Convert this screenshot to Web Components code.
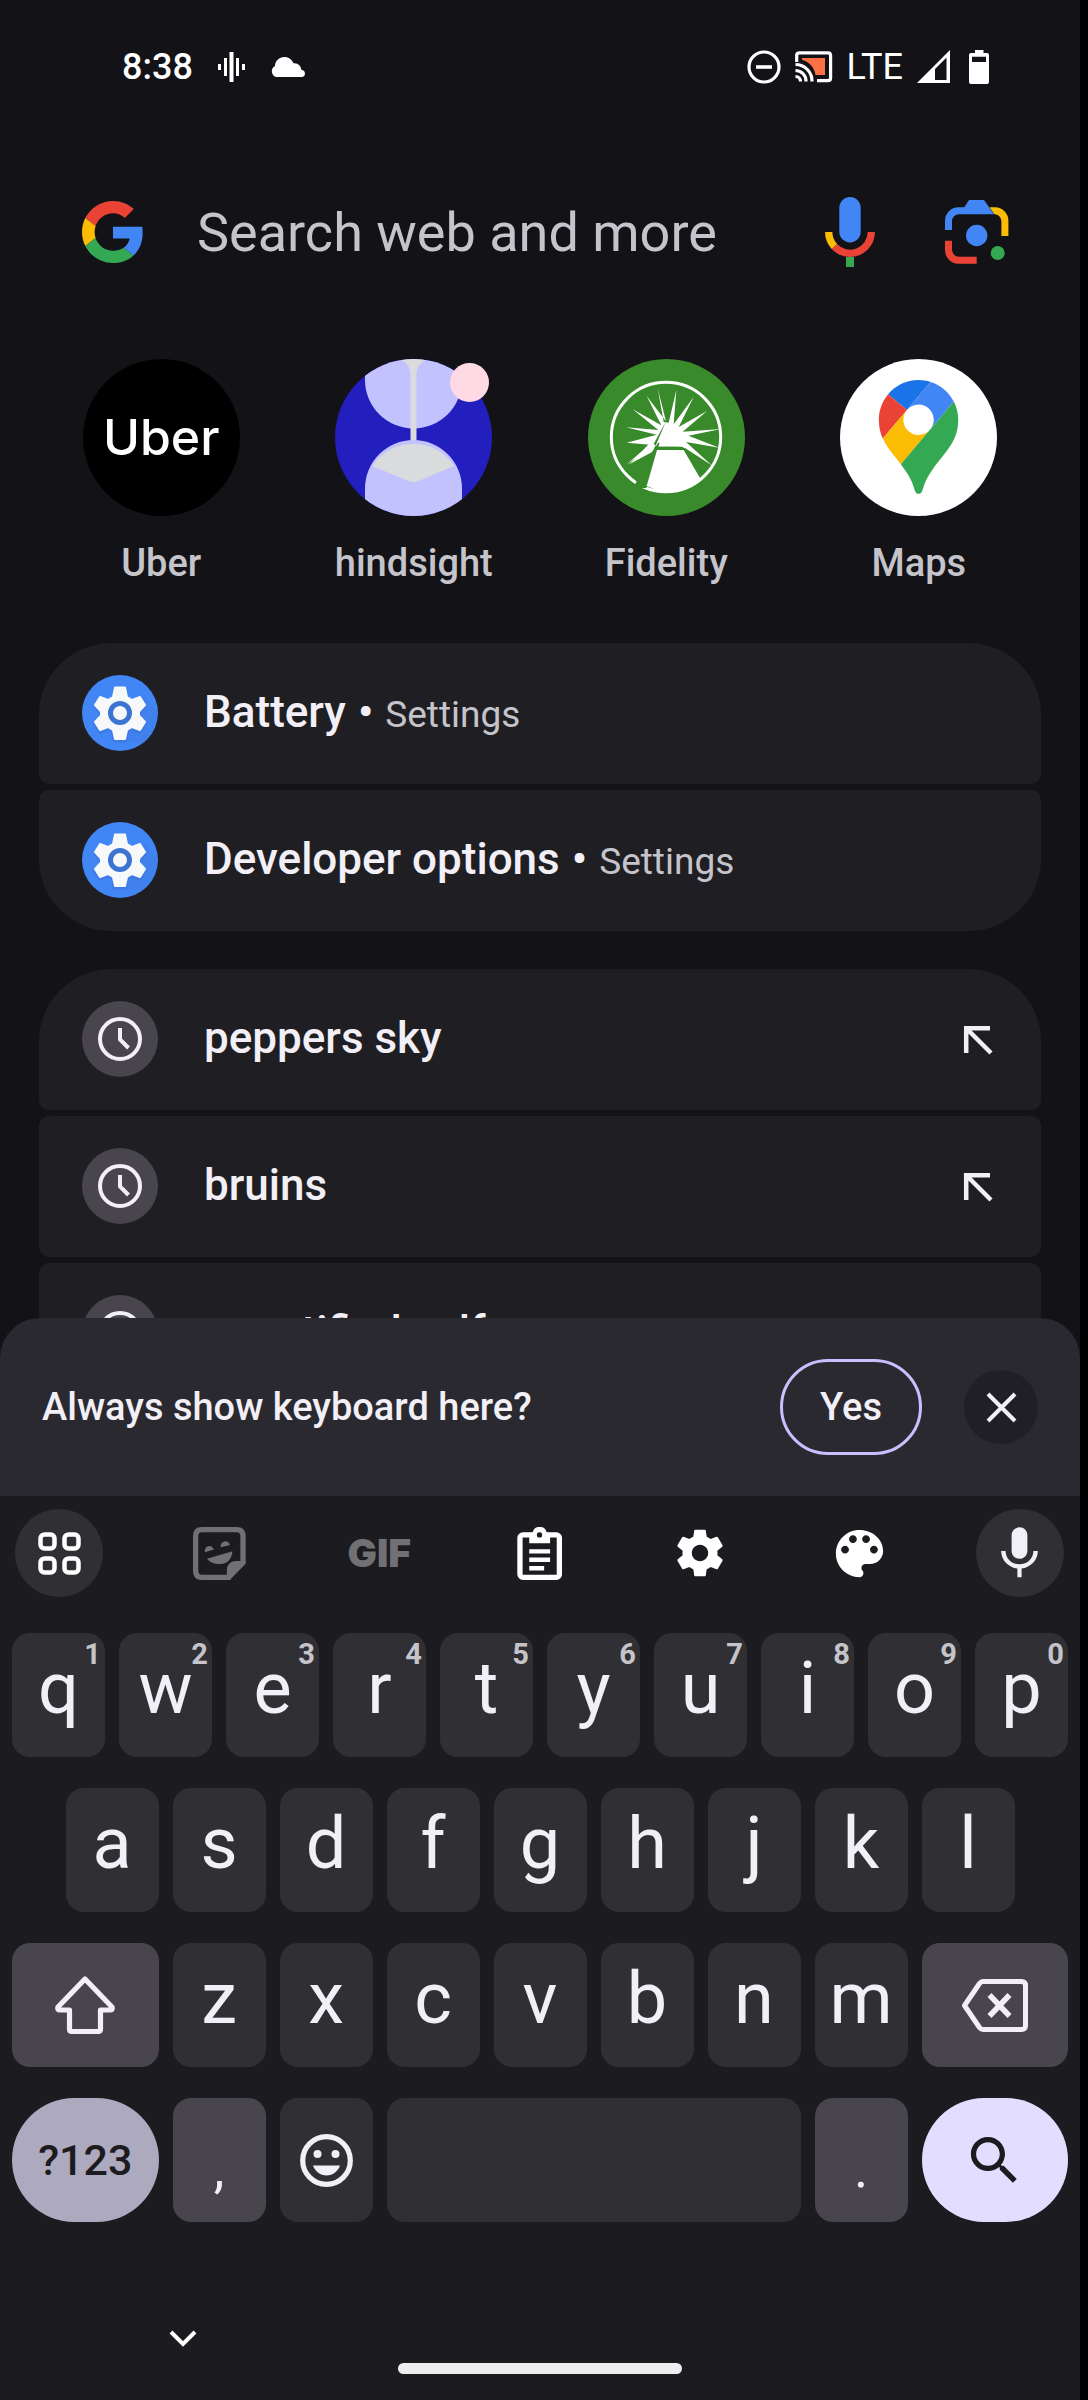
<!DOCTYPE html>
<html lang="en">
<head>
<meta charset="utf-8">
<meta name="viewport" content="width=device-width, initial-scale=1">
<title>Search</title>
<style>
  :root {
    --surface: #131317;
    --card: #1f1f23;
    --prompt: #2b2930;
    --keyboard: #1c1b20;
    --key: #303034;
    --key-strong: #48464c;
    --text: #f2eff6;
    --muted: #c6c4cb;
    --disabled: #717074;
    --accent: #c9bfff;
  }
  body { margin: 0; background: #000; font-family: Roboto, "Noto Sans", sans-serif; color: var(--text); }
</style>
</head>
<body>
<phone-screen>
  <status-bar></status-bar>
  <search-box placeholder="Search web and more"></search-box>
  <app-row>
    <app-shortcut label="Uber" art="uber"></app-shortcut>
    <app-shortcut label="hindsight" art="hindsight" badge></app-shortcut>
    <app-shortcut label="Fidelity" art="fidelity"></app-shortcut>
    <app-shortcut label="Maps" art="maps"></app-shortcut>
  </app-row>
  <result-group>
    <result-item icon="settings-app" source="Settings">Battery</result-item>
    <result-item icon="settings-app" source="Settings">Developer options</result-item>
  </result-group>
  <result-group>
    <result-item icon="clock" fill>peppers sky</result-item>
    <result-item icon="clock" fill>bruins</result-item>
    <result-item icon="clock" fill>quantified self</result-item>
  </result-group>
  <soft-keyboard slot="keyboard"></soft-keyboard>
</phone-screen>

<script>
const ICONS = {
  wave: [27, 30, '0 0 27 30', '<path stroke="#fff" stroke-width="3" d="M1.500 12v6M7.500 6v18M19.500 6v18M25.500 12v6"/><path stroke="#fff" stroke-width="4" d="M13.500 0v30"/>'],
  cloud: [36, 20, '0 0 36 20', '<path fill="#fff" d="M6 20a6 6 0 0 1-1-11C5 4 9 0 14.500 0c4 0 7.500 2.500 9 6.300C28 5.700 31 9 31.500 13A3.600 3.600 0 0 1 32.500 20z"/>'],
  dnd: [34, 34, '0 0 34 34', '<circle cx="17" cy="17" r="15" fill="none" stroke="#fff" stroke-width="3.200"/><path stroke="#fff" stroke-width="3.600" d="M9 17h16"/>'],
  cast: [38, 32, '0 0 38 32', '<g fill="none" stroke="#fff" stroke-width="3.200"><path d="M1.700 11V4.500q0-2.700 2.700-2.700h28.500q2.700 0 2.700 2.700v22.500q0 2.700-2.700 2.700H22"/><path d="M.5 13.500A16.500 16.500 0 0 1 17 30.500M.5 19.500A10.500 10.500 0 0 1 11 30.500"/><path d="M.5 25.500A5 5 0 0 1 5.500 30.500"/></g><path fill="#ff7043" d="M7 7h23v17h-9.500C19 16 14.500 11 7 8.800z"/>'],
  signal: [33, 33, '0 0 33 33', '<path fill="#fff" fill-rule="evenodd" d="M0 33 33 0v33zM18 19v11h11.500V7.500z"/>'],
  battery: [20, 34, '0 0 20 34', '<path fill="#fff" fill-rule="evenodd" d="M6 0h8.500v3H18q2 0 2 2v27q0 2-2 2H2q-2 0-2-2V5q0-2 2-2h4zM3 6.800V12h14V6.800z"/>'],
  google: [62, 62, '0 0 48 48', '<path fill="#ea4335" d="M24 9.500c3.540 0 6.710 1.220 9.210 3.600l6.850-6.850C35.900 2.380 30.470 0 24 0 14.620 0 6.510 5.380 2.560 13.220l7.980 6.190C12.430 13.720 17.740 9.500 24 9.500z"/><path fill="#4285f4" d="M46.980 24.550c0-1.570-.15-3.090-.38-4.550H24v9.020h12.940c-.58 2.960-2.260 5.480-4.780 7.180l7.730 6c4.510-4.180 7.090-10.360 7.090-17.650z"/><path fill="#fbbc05" d="M10.530 28.590c-.48-1.450-.76-2.990-.76-4.590s.27-3.140.76-4.590l-7.980-6.190C.92 16.460 0 20.120 0 24c0 3.880.92 7.540 2.560 10.780l7.970-6.190z"/><path fill="#34a853" d="M24 48c6.480 0 11.930-2.130 15.890-5.810l-7.730-6c-2.150 1.450-4.920 2.300-8.160 2.300-6.260 0-11.570-4.220-13.470-9.910l-7.980 6.190C6.510 42.620 14.620 48 24 48z"/>'],
  voice: [50, 70, '0 0 50 70', '<rect x="14.300" width="21.400" height="45.500" rx="10.700" fill="#4285f4"/><g fill="none" stroke-width="7.300"><path stroke="#ea4335" d="M9.400 49.500A21.300 21.300 0 0 0 46.300 35"/><path stroke="#fbbc05" d="M3.700 35A21.300 21.300 0 0 0 9.400 49.500"/></g><path fill="#34a853" d="M21 60h8v10h-8z"/>'],
  lens: [64, 64, '0 0 64 64', '<path fill="#fbbc05" d="M44.500 7.300h5.500A13.400 13.400 0 0 1 63.400 20.700V36h-7V21a6.700 6.700 0 0 0-7-6.700z"/><path fill="#4285f4" d="M0 30V20.700A13.400 13.400 0 0 1 13.400 7.300H19.300L24 0h15l10 14.300H14a7 7 0 0 0-7 7V30z"/><path fill="#ea4335" d="M0 40.700h7v9a7 7 0 0 0 7 7H31.700v7H13.400A13.400 13.400 0 0 1 0 50.300z"/><circle cx="31.700" cy="35.500" r="10.700" fill="#4285f4"/><circle cx="52.700" cy="53" r="7" fill="#34a853"/>'],
  hindsight: [157, 157, '0 0 157 157', '<defs><clipPath id="disc"><circle cx="78.500" cy="78.500" r="78.500"/></clipPath></defs><g clip-path="url(#disc)"><path fill="#231fbe" d="M0 0h157v157H0z"/><path fill="#c2c2ff" d="M30 0h97v21a48.500 48.500 0 0 1-97 0z"/><path fill="#dadbdc" d="M62 0h33c-9 2-13.500 7-13.500 16v68h-6V16C75.500 7 71 2 62 0z"/><path fill="#c2c2ff" d="M30 157v-27.500a48.500 48.500 0 0 1 97 0V157z"/><path fill="#dadbdc" d="M37.500 107a48.500 48.500 0 0 1 81.500 0l-35.500 15q-5 2-10 0z"/></g>'],
  fidelity: [157, 157, '801 57 471 471', '<circle cx="1036.500" cy="292.500" r="235.500" fill="#388a2a"/><circle cx="1035" cy="291" r="164" fill="none" stroke="#fff" stroke-width="9"/><path fill="#fff" d="m1010 145 18 101 15 2 23-98-8 103 60-82-45 90 85-48-73 62 115-8-98 20 93 36-100-17 77 70-80-52-80-16-20 29-67 36 62-59-70-6 90-24-92-22 97 8-77-62 86 48-44-88 58 76z"/><path fill="#388a2a" d="M1034 246 998 312l16 12-38 120h-40l60-108z M1000 320h84l8 10h-90z"/><path fill="#fff" d="m1036 250-24 70h70z"/><path fill="#388a2a" d="M1004 320h76l10 10h-86z"/><path fill="#fff" d="M1008 330h80l49 84q-60 70-160 24zM1003 318l-30 24-35 17-22 15 48-42 22-22z"/>'],
  maps: [157, 157, '-45.200 -24.500 182.700 182.700', '<circle cx="46.150" cy="66.850" r="91.350" fill="#fff"/><path fill="#1a73e8" d="M60.200 2.200C55.800.8 51 0 46.100 0 32 0 19.300 6.400 10.800 16.500l21.800 18.300L60.200 2.200z"/><path fill="#ea4335" d="M10.800 16.500C4.100 24.500 0 34.900 0 46.100c0 8.700 1.700 15.700 4.600 22l28-33.300-21.800-18.300z"/><path fill="#4285f4" d="M46.200 28.500c9.800 0 17.700 7.900 17.700 17.700 0 4.300-1.600 8.300-4.200 11.400 0 0 13.900-16.600 27.500-32.700-5.600-10.800-15.300-19-27-22.700L32.600 34.800c3.300-3.800 8.100-6.300 13.600-6.300"/><path fill="#fbbc04" d="M46.200 63.800c-9.800 0-17.700-7.900-17.700-17.700 0-4.300 1.500-8.300 4.100-11.300l-28 33.300c4.800 10.600 12.800 19.200 21 29.900l34.100-40.500c-3.300 3.900-8.100 6.300-13.500 6.300"/><path fill="#34a853" d="M59.100 109.200c15.400-24.100 33.300-35 33.300-63 0-7.700-1.900-14.900-5.200-21.300L25.600 98c2.600 3.400 5.300 7.300 7.900 11.300 9.400 14.500 6.800 23.100 12.800 23.100s3.400-8.700 12.800-23.200"/>'],
  gear: [56, 56, '0 0 24 24', '<path fill="#fff" d="M19.430 12.980c.04-.32.07-.64.07-.98s-.03-.66-.07-.98l2.110-1.650c.19-.15.24-.42.12-.64l-2-3.460c-.12-.22-.39-.3-.61-.22l-2.490 1c-.52-.4-1.080-.73-1.690-.98l-.38-2.650C14.460 2.180 14.250 2 14 2h-4c-.25 0-.46.18-.49.42l-.38 2.650c-.61.25-1.170.59-1.690.98l-2.490-1c-.23-.09-.49 0-.61.22l-2 3.460c-.13.22-.07.49.12.64l2.110 1.650c-.04.32-.07.65-.07.98s.03.66.07.98l-2.110 1.650c-.19.15-.24.42-.12.64l2 3.460c.12.22.39.3.61.22l2.490-1c.52.4 1.080.73 1.690.98l.38 2.650c.03.24.24.42.49.42h4c.25 0 .46-.18.49-.42l.38-2.650c.61-.25 1.170-.59 1.690-.98l2.490 1c.23.09.49 0 .61-.22l2-3.460c.12-.22.07-.49-.12-.64l-2.110-1.650zM12 15.500c-1.930 0-3.500-1.570-3.500-3.500s1.570-3.500 3.500-3.500 3.500 1.570 3.500 3.500-1.570 3.500-3.500 3.500z"/>'],
  'settings-app': [76, 76, '0 0 76 76', '<circle cx="38" cy="38" r="38" fill="#4285f4"/><path fill="#3f7de6" opacity=".5" d="m62 22 13 13a38 38 0 0 1-14 33L36 66z"/><path fill="none" stroke="#3b74db" stroke-width="4" opacity=".5" stroke-linejoin="round" d="m33 14.500h10l2 9.500 5 3 8-3 5 8-6 6.500v4l6 6.500-5 8-8-3-5 3-2 9H33l-2-9-5-3-8 3-5-8 6-6.500v-4l-6-6.500 5-8 8 3 5-3z"/><path fill="#f6f8fa" stroke="#f6f8fa" stroke-width="2" stroke-linejoin="round" d="m33 12.500h10l2 9.500 5 3 8-3 5 8-6 6.500v4l6 6.500-5 8-8-3-5 3-2 9H33l-2-9-5-3-8 3-5-8 6-6.500v-4l-6-6.500 5-8 8 3 5-3z"/><circle cx="38" cy="38" r="9.500" fill="#f6f8fa" stroke="#3c74d2" stroke-width="5"/>'],
  clock: [76, 76, '0 0 76 76', '<circle cx="38" cy="38" r="38" fill="#48464c"/><circle cx="38" cy="38" r="20" fill="none" stroke="#f2eff6" stroke-width="4"/><path fill="none" stroke="#f2eff6" stroke-width="4" d="M38 27v11.500l8.500 8.500"/>'],
  fillin: [46, 46, '0 0 46 46', '<path fill="none" stroke="#f2eff6" stroke-width="4.500" d="M12.200 37V12.200H36M13 13l24 24"/>'],
  close: [31, 31, '0 0 31 31', '<path fill="none" stroke="#f2eff6" stroke-width="4" d="m2 2 27 27M29 2 2 29"/>'],
  grid: [43, 43, '0 0 43 43', '<g fill="none" stroke="#fff" stroke-width="4.500"><rect x="2.500" y="2.500" width="14" height="14" rx="4"/><rect x="26.500" y="2.500" width="14" height="14" rx="4"/><rect x="2.500" y="26.500" width="14" height="14" rx="4"/><rect x="26.500" y="26.500" width="14" height="14" rx="4"/></g>'],
  sticker: [53, 53, '39 80 160 160', '<path fill="none" stroke="#717074" stroke-width="16" d="M190 188v-81q0-19-19-19H66q-19 0-19 19v106q0 19 19 19h86"/><path fill="#717074" d="M198 190v1l-48 49h-9v-27q0-30 30-30h27zM75 156a13.500 14 0 1 1 27-8zM123 141a14 14 0 1 1 28-7zM81 176l77-23c-2 30-22 39-40 39-16 0-29-6-37-16z"/>'],
  clipboard: [45, 53, '1011 80 134 160', '<rect x="1019" y="104" width="119" height="128" rx="9" fill="none" stroke="#fff" stroke-width="16"/><path fill="#fff" d="M1047 97h10a22 22 0 0 1 43 0h10v32h-63zM1047 147h63v13h-63zM1047 172h63v14h-63zM1047 198h45v13h-45z"/><circle cx="1078" cy="104" r="8" fill="#1c1b20"/>'],
  palette: [63, 63, '0 0 24 24', '<path fill="#fff" d="M12 3c-4.970 0-9 4.030-9 9s4.030 9 9 9c.83 0 1.500-.67 1.500-1.500 0-.39-.15-.74-.39-1.010-.23-.26-.38-.61-.38-.99 0-.83.67-1.500 1.500-1.500H16c2.760 0 5-2.240 5-5 0-4.420-4.030-8-9-8zm-5.500 9c-.83 0-1.500-.67-1.500-1.500S5.670 9 6.500 9 8 9.670 8 10.500 7.330 12 6.500 12zm3-4C8.670 8 8 7.330 8 6.500S8.670 5 9.500 5s1.500.67 1.500 1.500S10.330 8 9.500 8zm5 0c-.83 0-1.500-.67-1.500-1.500S13.670 5 14.500 5s1.500.67 1.500 1.500S15.330 8 14.500 8zm3 4c-.83 0-1.500-.67-1.500-1.500S16.670 9 17.500 9s1.500.67 1.500 1.500-.67 1.500-1.500 1.500z"/>'],
  mic: [63, 63, '0 0 24 24', '<path fill="#f2eff6" d="M12 14c1.660 0 3-1.340 3-3V5c0-1.660-1.340-3-3-3S9 3.340 9 5v6c0 1.660 1.340 3 3 3zm5.300-3c0 2.900-2.400 5.100-5.300 5.100S6.700 13.900 6.700 11H5c0 3.410 2.720 6.230 6.200 6.720V21h1.600v-3.280c3.480-.48 6.200-3.300 6.200-6.720z"/>'],
  shift: [60, 58, '0 0 60 58', '<path fill="none" stroke="#f2eff6" stroke-width="5.200" stroke-linejoin="round" d="M30 3 3 31q-1 3 2 3h9.500v19q0 2.500 2.500 2.500h26q2.500 0 2.500-2.500V34H55q3 0 2-3z"/>'],
  backspace: [66, 53, '0 0 66 53', '<path fill="none" stroke="#f2eff6" stroke-width="5" stroke-linejoin="round" d="M21 2.500h38.500q4 0 4 4v40q0 4-4 4H21q-2 0-3.500-2L2.500 26.500 17.500 4.500q1.500-2 3.500-2z"/><path stroke="#f2eff6" stroke-width="5.500" d="m27.500 16 20 21M47.500 16l-20 21"/>'],
  emoji: [53, 53, '0 0 53 53', '<circle cx="26.500" cy="26.500" r="23.800" fill="none" stroke="#f2eff6" stroke-width="5.200"/><circle cx="17.500" cy="20" r="4" fill="#f2eff6"/><circle cx="35.500" cy="20" r="4" fill="#f2eff6"/><path fill="#f2eff6" d="M13 31.500h27c-2 6-7.500 10-13.500 10s-11.500-4-13.500-10z"/>'],
  search: [63, 63, '0 0 24 24', '<path fill="#1c1b20" d="M15.500 14h-.79l-.28-.27C15.410 12.590 16 11.110 16 9.500 16 5.910 13.090 3 9.500 3S3 5.910 3 9.500 5.910 16 9.500 16c1.610 0 3.090-.59 4.230-1.570l.27.28v.79l5 4.990L20.490 19l-4.990-5zm-6 0C7.010 14 5 11.990 5 9.500S7.010 5 9.500 5 14 7.010 14 9.500 11.990 14 9.500 14z"/>'],
  chevron: [28, 18, '0 0 28 18', '<path fill="none" stroke="#fff" stroke-width="4" d="m2 2 12 12L26 2"/>']
};

class BaseElement extends HTMLElement {
  connectedCallback() {
    if (this.shadowRoot) return;
    this.attachShadow({ mode: 'open' }).innerHTML =
      `<style>:host,*{box-sizing:border-box}button,input{font:inherit;color:inherit;border:0;padding:0;margin:0;background:none;cursor:pointer}${this.css()}</style>${this.html()}`;
  }
  css() { return ''; }
  html() { return '<slot></slot>'; }
}

customElements.define('ui-icon', class extends BaseElement {
  css() { return ':host{display:inline-flex;flex:none}svg{display:block}'; }
  html() {
    const [w, h, box, art] = ICONS[this.getAttribute('name')];
    return `<svg width="${w}" height="${h}" viewBox="${box}" aria-hidden="true">${art}</svg>`;
  }
});

customElements.define('phone-screen', class extends BaseElement {
  css() {
    return `:host{display:flex;flex-direction:column;height:100vh;margin-right:8px;background:var(--surface)}
      main{flex:1;min-height:0;overflow:hidden;padding:0 39px}
      ::slotted([slot=keyboard]){position:relative;margin-top:-40px}`;
  }
  html() { return '<main><slot></slot></main><slot name="keyboard"></slot>'; }
});

customElements.define('status-bar', class extends BaseElement {
  css() {
    return `:host{display:flex;align-items:center;justify-content:space-between;height:134px;padding:0 52px 0 83px;color:#fff;font-size:36px}
      div{display:flex;align-items:center}
      .left{gap:25px;font-weight:500}.right{gap:14px}
      .end{display:flex;gap:19px}`;
  }
  html() {
    return `<div class="left"><time>8:38</time><ui-icon name="wave"></ui-icon><ui-icon name="cloud"></ui-icon></div>
      <div class="right"><ui-icon name="dnd"></ui-icon><ui-icon name="cast"></ui-icon><span>LTE</span><span class="end"><ui-icon name="signal"></ui-icon><ui-icon name="battery"></ui-icon></span></div>`;
  }
});

customElements.define('search-box', class extends BaseElement {
  css() {
    return `:host{display:block;padding:38px 32px 67px 43px}
      form{display:flex;align-items:center;height:120px}
      input{flex:1;min-width:0;margin-left:53px;font-size:54px;outline:0;cursor:text}
      input::placeholder{color:var(--muted);opacity:1}
      button{display:flex;align-items:center;justify-content:center}
      .voice{margin-right:70px}`;
  }
  html() {
    const p = this.getAttribute('placeholder');
    return `<form><ui-icon name="google"></ui-icon><input type="text" aria-label="${p}" placeholder="${p}">
      <button type="button" class="voice" aria-label="Voice search"><ui-icon name="voice"></ui-icon></button>
      <button type="button" aria-label="Lens"><ui-icon name="lens"></ui-icon></button></form>`;
  }
});

customElements.define('app-row', class extends BaseElement {
  css() { return ':host{display:grid;grid-template-columns:repeat(4,1fr);margin:0 -4px}'; }
});

customElements.define('app-shortcut', class extends BaseElement {
  css() {
    return `:host{display:flex;justify-content:center}
      a{display:flex;flex-direction:column;align-items:center;gap:23px;color:var(--muted);text-decoration:none;font-size:38px;line-height:48px;font-weight:500}
      .art{position:relative;display:flex}
      .uber{width:157px;height:157px;border-radius:50%;background:#000;color:#fff;font:500 50px/157px Inter,sans-serif;text-align:center}
      .badge{position:absolute;right:3px;top:4px;width:39px;height:39px;border-radius:50%;background:#ffd9e3}`;
  }
  html() {
    const art = this.getAttribute('art');
    return `<a href="#"><span class="art">${art === 'uber' ? '<span class="uber">Uber</span>' : `<ui-icon name="${art}"></ui-icon>`}${this.hasAttribute('badge') ? '<span class="badge"></span>' : ''}</span><span>${this.getAttribute('label')}</span></a>`;
  }
});

customElements.define('result-group', class extends BaseElement {
  css() {
    return `:host{display:flex;flex-direction:column;gap:6px;margin-bottom:38px}
      :host(:first-of-type){margin-top:56px}
      ::slotted(*){border-radius:10px}
      ::slotted(:first-child){border-top-left-radius:72px;border-top-right-radius:72px}
      ::slotted(:last-child){border-bottom-left-radius:72px;border-bottom-right-radius:72px}`;
  }
});

customElements.define('result-item', class extends BaseElement {
  css() {
    return `:host{display:flex;align-items:center;min-height:141px;padding:0 41px 2px 43px;background:var(--card)}
      a{flex:1;display:flex;align-items:center;gap:46px;color:inherit;text-decoration:none;font-size:44px;font-weight:500}
      .text{display:flex;align-items:baseline;gap:12px;padding-bottom:2px}
      small{font-size:37px;font-weight:400;color:var(--muted)}
      button{display:flex}`;
  }
  html() {
    const source = this.getAttribute('source');
    return `<a href="#"><ui-icon name="${this.getAttribute('icon')}"></ui-icon><span class="text"><span><slot></slot></span>${source ? `<span>•</span><small>${source}</small>` : ''}</span></a>${this.hasAttribute('fill') ? '<button type="button" aria-label="Use this search"><ui-icon name="fillin"></ui-icon></button>' : ''}`;
  }
});

customElements.define('kb-key', class extends BaseElement {
  css() {
    return `:host{display:block;grid-column:span 2}
      :host([wide]){grid-column:span 3}
      :host([space]){grid-column:span 8}
      :host([indent]){grid-column:2/span 2}
      button{position:relative;display:flex;align-items:center;justify-content:center;width:100%;height:124px;border-radius:18px;background:var(--key);font-size:72px;line-height:84px}
      .letter{padding-bottom:12px}
      :host([strong]) button{background:var(--key-strong)}
      :host([mode]) button{border-radius:62px;background:#adaabf;color:#1c1b20;font-size:43px;font-weight:500}
      :host([enter]) button{border-radius:62px;background:#e3deff}
      :host([low]) button{font-size:54px}
      :host([low]) .letter{padding:18px 0 0}
      .hint{position:absolute;top:4px;right:4px;font-size:29px;line-height:34px;font-weight:700;color:var(--muted)}`;
  }
  html() {
    const icon = this.getAttribute('icon'), hint = this.getAttribute('hint'), label = this.getAttribute('label');
    const face = icon ? `<ui-icon name="${icon}"></ui-icon>` : label ? `<span class="${this.hasAttribute('mode') ? '' : 'letter'}">${label}</span>` : '';
    return `<button type="button" aria-label="${this.getAttribute('name') || label}">${face}${hint ? `<span class="hint">${hint}</span>` : ''}</button>`;
  }
});

customElements.define('keyboard-prompt', class extends BaseElement {
  css() {
    return `:host{display:flex;align-items:center;height:178px;padding:0 42px;border-radius:40px 40px 0 0;background:var(--prompt);font-size:38px;font-weight:500}
      p{flex:1;margin:0}
      .yes{width:142px;height:96px;border:3px solid var(--accent);border-radius:48px}
      .close{display:flex;align-items:center;justify-content:center;width:74px;height:74px;margin-left:42px;border-radius:50%;background:#1f1f25}`;
  }
  html() {
    return `<p>Always show keyboard here?</p><button type="button" class="yes">Yes</button>
      <button type="button" class="close" aria-label="Close"><ui-icon name="close"></ui-icon></button>`;
  }
});

customElements.define('keyboard-tools', class extends BaseElement {
  css() {
    return `:host{display:flex;justify-content:space-between;padding:13px 16px 36px 15px}
      button{display:flex;align-items:center;justify-content:center;width:88px;height:88px;border-radius:50%}
      .round{background:var(--key)}
      .gif{color:var(--disabled);font:900 39px/44px Inter,sans-serif}`;
  }
  html() {
    const tool = (name, title, round) => `<button type="button" class="${round ? 'round' : ''}" aria-label="${title}"><ui-icon name="${name}"></ui-icon></button>`;
    return tool('grid', 'More', true) + tool('sticker', 'Stickers') + '<button type="button" class="gif">GIF</button>' +
      tool('clipboard', 'Clipboard') + tool('gear', 'Settings') + tool('palette', 'Theme') + tool('mic', 'Voice typing', true);
  }
});

customElements.define('soft-keyboard', class extends BaseElement {
  css() {
    return `:host{display:block}
      .body{background:var(--keyboard)}
      .keys{display:grid;grid-template-columns:repeat(20,1fr);gap:31px 14px;padding:0 12px}
      .nav{display:flex;flex-direction:column;justify-content:space-between;height:178px;padding:108px 0 26px}
      .hide{display:flex;margin-left:169px;align-self:flex-start}
      .home{width:284px;height:11px;border-radius:6px;background:#eee;align-self:center}`;
  }
  html() {
    const top = [...'qwertyuiop'].map((c, i) => `<kb-key label="${c}" hint="${(i + 1) % 10}"></kb-key>`).join('');
    const home = [...'asdfghjkl'].map((c, i) => `<kb-key label="${c}"${i ? '' : ' indent'}></kb-key>`).join('');
    const low = [...'zxcvbnm'].map(c => `<kb-key label="${c}"></kb-key>`).join('');
    return `<keyboard-prompt></keyboard-prompt><div class="body"><keyboard-tools></keyboard-tools><div class="keys">${top}${home}
      <kb-key wide strong icon="shift" name="Shift"></kb-key>${low}<kb-key wide strong icon="backspace" name="Delete"></kb-key>
      <kb-key wide mode label="?123"></kb-key><kb-key strong low label=","></kb-key><kb-key icon="emoji" name="Emoji"></kb-key><kb-key space name="Space"></kb-key><kb-key strong low label="."></kb-key><kb-key wide enter icon="search" name="Search"></kb-key></div>
      <div class="nav"><button type="button" class="hide" aria-label="Hide keyboard"><ui-icon name="chevron"></ui-icon></button><div class="home"></div></div></div>`;
  }
});
</script>
</body>
</html>
